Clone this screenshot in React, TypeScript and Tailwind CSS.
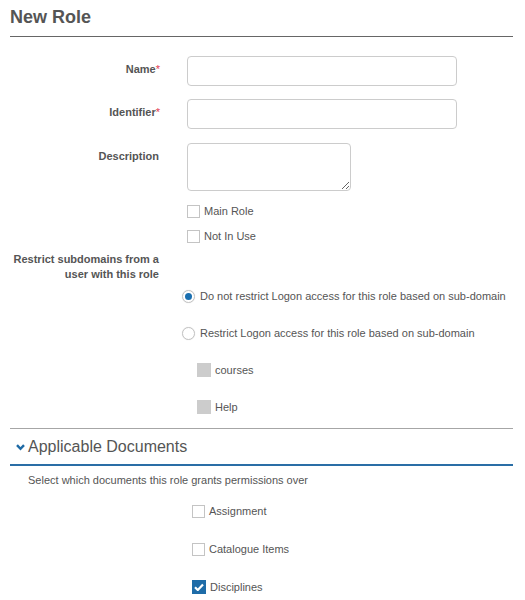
import React from 'react'

function Box({ checked = false, disabled = false }: { checked?: boolean; disabled?: boolean }) {
  if (disabled) return <span className="block shrink-0 w-[14px] h-[14px] bg-[#cccccc]" />
  if (checked)
    return (
      <span className="flex shrink-0 items-center justify-center w-[14px] h-[14px] bg-[#1e6ca8]">
        <svg width="10" height="8" viewBox="0 0 10 8">
          <path d="M1 4.2 L3.8 7 L9 1.5" fill="none" stroke="#fff" strokeWidth="2.2" />
        </svg>
      </span>
    )
  return <span className="block shrink-0 w-[13px] h-[13px] border border-[#c4c4c4] bg-white" />
}

function Radio({ checked = false }: { checked?: boolean }) {
  return (
    <span className="flex shrink-0 items-center justify-center w-[13px] h-[13px] rounded-full border border-[#c4c4c4] bg-white shadow-[0_0_1px_rgba(0,0,0,0.15)]">
      {checked && <span className="block w-[7px] h-[7px] rounded-full bg-[#1a6fb0]" />}
    </span>
  )
}

function Req() {
  return <span className="text-[#e23a50] font-normal">*</span>
}

export default function App() {
  return (
    <div className="w-[525px] h-[600px] overflow-hidden bg-white text-[#555] [font-family:'Liberation_Sans',Arial,sans-serif] text-[11px] leading-[15px]">
      <div className="pl-[10px] pr-[12px]">
        <h1 className="pt-[7px] pb-[9px] text-[18px] leading-[20px] font-bold border-b border-[#666]">New Role</h1>

        {/* general fields */}
        <div className="flex mt-[19px]">
          <label className="w-[150px] shrink-0 text-right font-bold pt-[6px]">
            Name<Req />
          </label>
          <input className="ml-[27px] w-[270px] h-[30px] border border-[#cccccc] rounded-[4px]" />
        </div>
        <div className="flex mt-[13px]">
          <label className="w-[150px] shrink-0 text-right font-bold pt-[6px]">
            Identifier<Req />
          </label>
          <input className="ml-[27px] w-[270px] h-[30px] border border-[#cccccc] rounded-[4px]" />
        </div>
        <div className="flex mt-[14px]">
          <label className="w-[150px] shrink-0 text-right font-bold pt-[6px] pr-[1px]">Description</label>
          <textarea className="block ml-[27px] w-[164px] h-[48px] border border-[#cccccc] rounded-[4px]" />
        </div>

        <div className="ml-[177px] mt-[14px] flex flex-col gap-[12px]">
          <div className="flex items-center gap-[4px] h-[13px]">
            <Box />
            <span>Main Role</span>
          </div>
          <div className="flex items-center gap-[4px] h-[13px]">
            <Box />
            <span>Not In Use</span>
          </div>
        </div>

        <div className="mt-[9px] w-[150px] text-right font-bold pr-[1px]">
          Restrict subdomains from a user with this role
        </div>

        <div className="ml-[172px] mt-[7px] flex flex-col gap-[23px] whitespace-nowrap">
          <div className="flex items-center gap-[5px] h-[14px]">
            <Radio checked />
            <span>Do not restrict Logon access for this role based on sub-domain</span>
          </div>
          <div className="flex items-center gap-[5px] h-[14px]">
            <Radio />
            <span>Restrict Logon access for this role based on sub-domain</span>
          </div>
          <div className="flex items-center gap-[4px] h-[14px] ml-[15px]">
            <Box disabled />
            <span>courses</span>
          </div>
          <div className="flex items-center gap-[4px] h-[14px] ml-[15px]">
            <Box disabled />
            <span>Help</span>
          </div>
        </div>

        <div className="mt-[14px] border-t border-[#a6a6a6]" />

        {/* applicable documents */}
        <div className="pt-[6px] pb-[5px] flex items-center border-b-2 border-[#2a6ea6]">
          <svg width="9" height="7" viewBox="0 0 9 7" className="ml-[6px] mr-[3px] shrink-0">
            <path d="M1 1.2 L4.5 4.8 L8 1.2" fill="none" stroke="#1e6aa5" strokeWidth="2.4" />
          </svg>
          <span className="text-[16px] leading-[24px]">Applicable Documents</span>
        </div>
        <p className="mt-[7px] ml-[18px]">Select which documents this role grants permissions over</p>
        <div className="ml-[182px] mt-[16px] flex flex-col gap-[24px]">
          <div className="flex items-center gap-[4px] h-[14px]">
            <Box />
            <span>Assignment</span>
          </div>
          <div className="flex items-center gap-[4px] h-[14px]">
            <Box />
            <span>Catalogue Items</span>
          </div>
          <div className="flex items-center gap-[4px] h-[14px]">
            <Box checked />
            <span>Disciplines</span>
          </div>
        </div>
      </div>
    </div>
  )
}
